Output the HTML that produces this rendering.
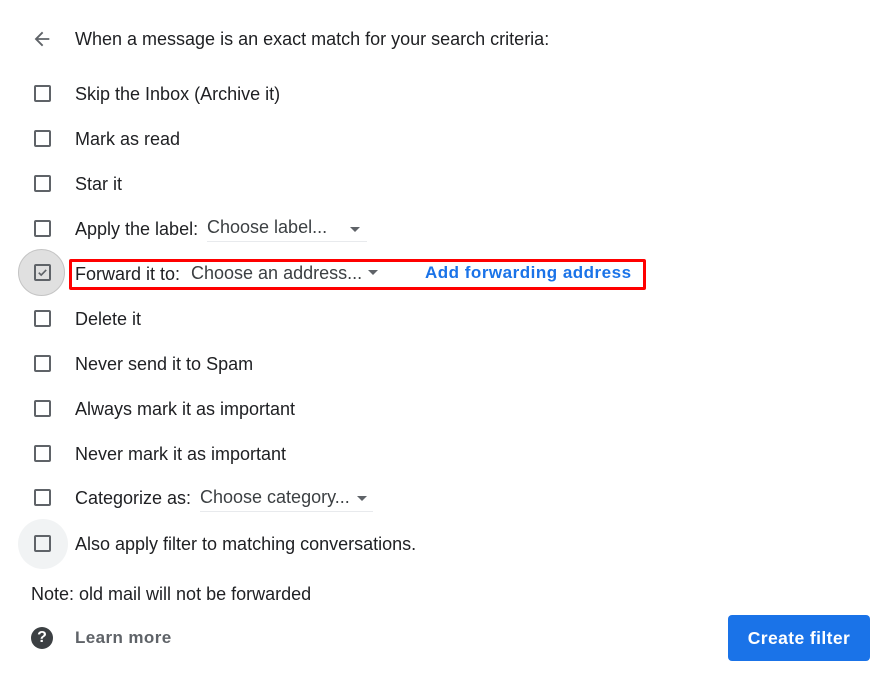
<!DOCTYPE html>
<html><head><style>
body{margin:0;width:896px;height:687px;background:#fff;font-family:"Liberation Sans",Arial,sans-serif;position:relative;overflow:hidden;color:#202124}
.t{position:absolute;font-size:18px;line-height:20px;white-space:nowrap}
.cb{position:absolute;left:34px;width:13px;height:13px;border:2px solid #5f6368;border-radius:2px}
.sel{position:absolute;font-size:18px;line-height:20px;color:#3c4043;border-bottom:1px solid #e8eaed;height:24px;white-space:nowrap}
.arr{position:absolute;width:0;height:0;border-left:5px solid transparent;border-right:5px solid transparent;border-top:5px solid #5f6368}
</style></head><body>
<svg style="position:absolute;left:31px;top:28px" width="22" height="22" viewBox="0 0 24 24"><path d="M20 11H7.83l5.59-5.59L12 4l-8 8 8 8 1.41-1.41L7.83 13H20v-2z" fill="#5f6368"/></svg>
<div class="t" style="left:75px;top:29px">When a message is an exact match for your search criteria:</div>

<div class="cb" style="top:85px"></div><div class="t" style="left:75px;top:84px">Skip the Inbox (Archive it)</div>
<div class="cb" style="top:130px"></div><div class="t" style="left:75px;top:129px">Mark as read</div>
<div class="cb" style="top:175px"></div><div class="t" style="left:75px;top:174px">Star it</div>
<div class="cb" style="top:220px"></div><div class="t" style="left:75px;top:219px">Apply the label:</div>
<div class="sel" style="left:207px;top:217px;width:160px">Choose label...</div><div class="arr" style="left:350px;top:227px"></div>

<div style="position:absolute;left:18px;top:249px;width:47px;height:47px;border-radius:50%;background:#e0e0e0;border:1px solid #c4c4c4;box-sizing:border-box"></div>
<div class="cb" style="top:264px"></div>
<svg style="position:absolute;left:36px;top:266px" width="13" height="13" viewBox="0 0 14 14"><path d="M3 7.2l2.6 2.6L11 4.2" stroke="#5f6368" stroke-width="1.8" fill="none"/></svg>
<div style="position:absolute;left:69px;top:259px;width:577px;height:31px;border:3px solid #f00;box-sizing:border-box;border-radius:2px"></div>
<div class="t" style="left:75px;top:264px">Forward it to:</div>
<div class="t" style="left:191px;top:263px;color:#3c4043">Choose an address...</div><div class="arr" style="left:368px;top:270px"></div>
<div class="t" style="left:425px;top:263px;color:#1a73e8;font-weight:bold;font-size:17px;letter-spacing:0.5px">Add forwarding address</div>

<div class="cb" style="top:310px"></div><div class="t" style="left:75px;top:309px">Delete it</div>
<div class="cb" style="top:355px"></div><div class="t" style="left:75px;top:354px">Never send it to Spam</div>
<div class="cb" style="top:400px"></div><div class="t" style="left:75px;top:399px">Always mark it as important</div>
<div class="cb" style="top:445px"></div><div class="t" style="left:75px;top:444px">Never mark it as important</div>
<div class="cb" style="top:489px"></div><div class="t" style="left:75px;top:488px">Categorize as:</div>
<div class="sel" style="left:200px;top:487px;width:173px">Choose category...</div><div class="arr" style="left:357px;top:496px"></div>

<div style="position:absolute;left:18px;top:519px;width:50px;height:50px;border-radius:50%;background:#f1f3f4"></div>
<div class="cb" style="top:535px"></div><div class="t" style="left:75px;top:534px">Also apply filter to matching conversations.</div>

<div class="t" style="left:31px;top:584px">Note: old mail will not be forwarded</div>
<div style="position:absolute;left:31px;top:627px;width:22px;height:22px;border-radius:50%;background:#3c4043;color:#fff;font-weight:bold;font-size:16px;line-height:22px;text-align:center">?</div>
<div class="t" style="left:75px;top:628px;color:#5f6368;font-weight:bold;font-size:17px;letter-spacing:0.4px">Learn more</div>
<div style="position:absolute;left:728px;top:615px;width:142px;height:46px;background:#1a73e8;border-radius:4px;color:#fff;font-weight:bold;font-size:17.5px;letter-spacing:0.4px;line-height:46px;text-align:center">Create filter</div>
</body></html>
